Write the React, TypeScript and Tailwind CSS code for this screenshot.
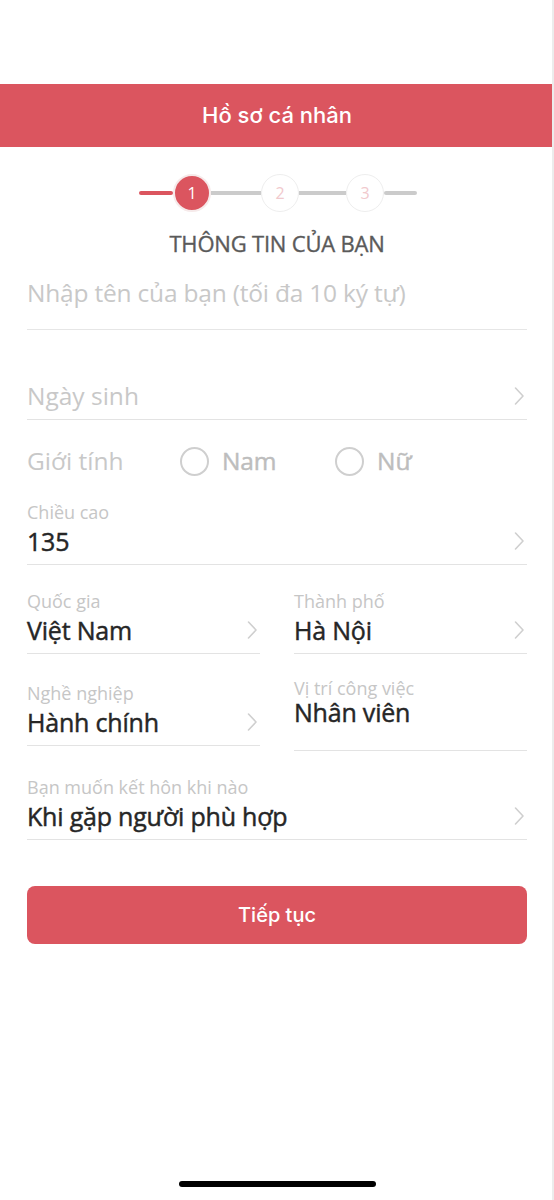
import React from "react";

const Chevron = () => (
  <svg width="12" height="20" viewBox="0 0 12 20" fill="none" className="shrink-0">
    <path d="M2.5 2 L10 10 L2.5 18" stroke="#cfcfcf" strokeWidth="1.6" strokeLinecap="round" strokeLinejoin="round" />
  </svg>
);

const Field = ({ label, value, chevron = true, className = "" }: { label: string; value: string; chevron?: boolean; className?: string }) => (
  <div className={`border-b border-[#e3e3e3] flex items-end justify-between pb-[7px] ${className}`}>
    <div className="flex flex-col">
      <span className="text-[18px] leading-[22px] text-[#c6c6c6]">{label}</span>
      <span className="text-[25px] leading-[32px] text-[#262626] mt-[2px] tracking-[-0.2px] [-webkit-text-stroke:0.45px_#262626]">{value}</span>
    </div>
    {chevron && <div className="mb-[6px] mr-[2px]"><Chevron /></div>}
  </div>
);

export default function App() {
  return (
    <div className="w-[554px] h-[1200px] bg-white relative overflow-hidden" style={{ fontFamily: '"Open Sans", "Noto Sans", sans-serif' }}>
      <div className="absolute right-0 top-0 h-full w-[2px] bg-[#ececec]" />
      <div className="h-[84px]" />
      <div className="h-[63px] bg-[#db555f] flex items-center justify-center">
        <span className="text-white text-[22px] font-medium" style={{ fontFamily: 'Inter, Roboto, sans-serif' }}>Hồ sơ cá nhân</span>
      </div>

      {/* stepper */}
      <div className="flex items-center justify-center mt-[27px] ml-[2px]">
        <div className="w-[34px] h-[4px] rounded-full bg-[#db555f]" />
        <div className="w-[38px] h-[38px] rounded-full bg-[#db555f] border-2 border-[#f6eaea] flex items-center justify-center text-white text-[16px]">1</div>
        <div className="w-[50px] h-[4px] bg-[#cbcbcb]" />
        <div className="w-[38px] h-[38px] rounded-full bg-white border border-[#eeeeee] flex items-center justify-center text-[#f1c9cd] text-[16px]">2</div>
        <div className="w-[47px] h-[4px] bg-[#cbcbcb]" />
        <div className="w-[38px] h-[38px] rounded-full bg-white border border-[#eeeeee] flex items-center justify-center text-[#f1c9cd] text-[16px]">3</div>
        <div className="w-[33px] h-[4px] rounded-full bg-[#cbcbcb]" />
      </div>

      <div className="text-center text-[22px] text-[#5a5a5a] mt-[17px] leading-[28px] tracking-[-0.2px] [-webkit-text-stroke:0.35px_#5a5a5a]">THÔNG TIN CỦA BẠN</div>

      <div className="px-[27px]">
        <div className="border-b border-[#e6e6e6] mt-[20px] pb-[20px] text-[24.5px] leading-[32px] text-[#c8c8c8] tracking-[-0.2px]">Nhập tên của bạn (tối đa 10 ký tự)</div>

        <div className="border-b border-[#e3e3e3] mt-[50px] pb-[7px] flex items-center justify-between">
          <span className="text-[24.5px] leading-[32px] text-[#c8c8c8]">Ngày sinh</span>
          <div className="mr-[2px]"><Chevron /></div>
        </div>

        <div className="flex items-center mt-[24px] h-[34px] text-[24.5px]">
          <span className="text-[#c8c8c8] w-[153px]">Giới tính</span>
          <span className="w-[29px] h-[29px] rounded-full border-2 border-[#cfcfcf]" />
          <span className="ml-[13px] text-[#bdbdbd] w-[113px] tracking-[-0.2px] [-webkit-text-stroke:0.45px_#bdbdbd]">Nam</span>
          <span className="w-[29px] h-[29px] rounded-full border-2 border-[#cfcfcf]" />
          <span className="ml-[13px] text-[#bdbdbd] [-webkit-text-stroke:0.45px_#bdbdbd]">Nữ</span>
        </div>

        <Field label="Chiều cao" value="135" className="mt-[23px]" />

        <div className="grid grid-cols-2 gap-x-[34px] mt-[25px]">
          <Field label="Quốc gia" value="Việt Nam" />
          <Field label="Thành phố" value="Hà Nội" />
        </div>

        <div className="grid grid-cols-2 gap-x-[34px] mt-[28px] items-start">
          <Field label="Nghề nghiệp" value="Hành chính" />
          <div className="border-b border-[#e3e3e3] h-[72px] flex flex-col -mt-[3px]">
            <span className="text-[18px] leading-[19px] text-[#c6c6c6]">Vị trí công việc</span>
            <span className="text-[25px] leading-[28px] text-[#262626] tracking-[-0.2px] [-webkit-text-stroke:0.45px_#262626]">Nhân viên</span>
          </div>
        </div>

        <Field label="Bạn muốn kết hôn khi nào" value="Khi gặp người phù hợp" className="mt-[25px]" />

        <button className="mt-[46px] w-full h-[58px] rounded-[8px] bg-[#db555f] text-white text-[20px] font-medium" style={{ fontFamily: 'Inter, Roboto, sans-serif' }}>Tiếp tục</button>
      </div>

      <div className="absolute left-[179px] top-[1181px] w-[197px] h-[6px] rounded-full bg-black" />
    </div>
  );
}
